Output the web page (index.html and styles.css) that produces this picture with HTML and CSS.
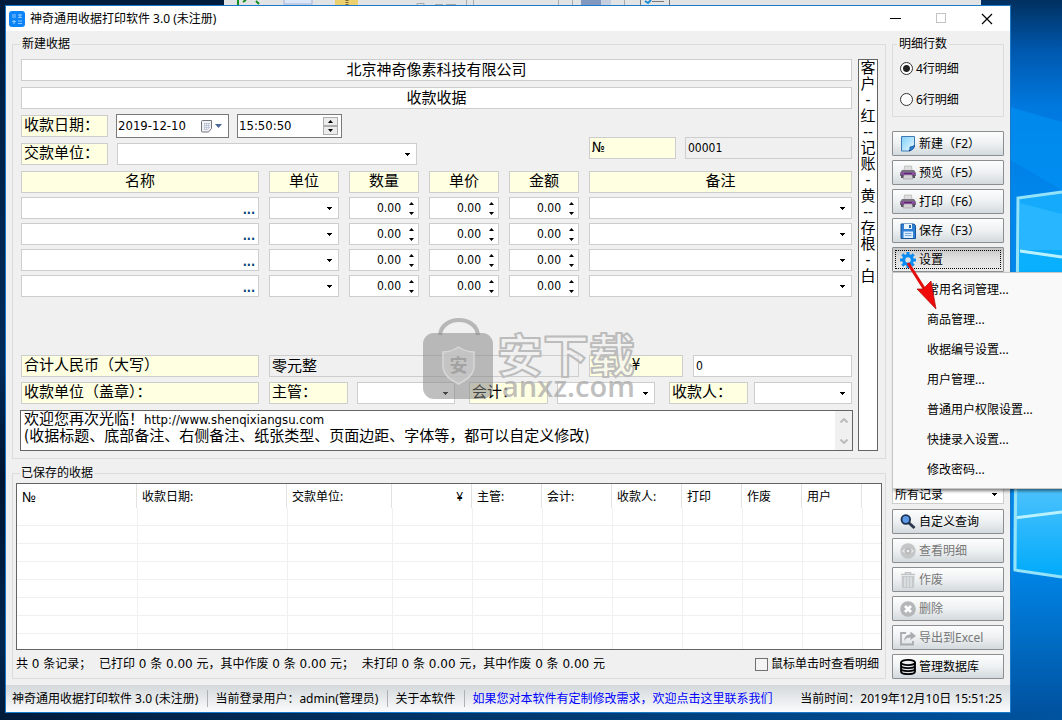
FILE: index.html
```html
<!DOCTYPE html>
<html lang="zh-CN">
<head>
<meta charset="utf-8">
<title>神奇通用收据打印软件 3.0</title>
<link rel="stylesheet" href="styles.css">
</head>
<body>
<div class="desktop">
  <svg class="wallpaper" viewBox="0 0 1062 720" preserveAspectRatio="none" aria-hidden="true">
    <defs>
      <linearGradient id="left" x1="0" y1="0" x2="0" y2="1"><stop offset="0" stop-color="#001c3d"/><stop offset=".5" stop-color="#002a58"/><stop offset=".66" stop-color="#001430"/><stop offset=".9" stop-color="#00264f"/><stop offset="1" stop-color="#001a3a"/></linearGradient>
      <linearGradient id="right" x1="0" y1="0" x2="0" y2="1"><stop offset="0" stop-color="#00305f"/><stop offset=".07" stop-color="#0058ae"/><stop offset=".15" stop-color="#0079df"/><stop offset=".28" stop-color="#0087ec"/><stop offset=".8" stop-color="#0083e4"/><stop offset="1" stop-color="#004f9c"/></linearGradient>
      <linearGradient id="bottom" x1="0" y1="0" x2="1" y2="0"><stop offset="0" stop-color="#001a3a"/><stop offset=".4" stop-color="#003466"/><stop offset="1" stop-color="#00539f"/></linearGradient>
      <linearGradient id="pane" x1="0" y1="0" x2="0" y2="1"><stop offset="0" stop-color="#18a9fb"/><stop offset=".3" stop-color="#00b4ff"/><stop offset=".75" stop-color="#53c4fd"/><stop offset="1" stop-color="#00aafa"/></linearGradient>
    </defs>
    <rect width="1000" height="720" fill="url(#left)"/>
    <rect x="981" width="81" height="720" fill="url(#right)"/>
    <rect y="712" width="1062" height="8" fill="url(#bottom)"/>
    <path d="M1010 107L1062 122V190L1010 160Z" fill="#0092f5" opacity=".6"/>
    <path d="M1017 197L1062 191V577L1013 570Z" fill="url(#pane)"/>
    <path d="M1020 203L1062 214V250L1020 250Z" fill="#27b6ff"/>
    <path d="M1020 251L1062 257" stroke="#b9f1ff" stroke-width="3"/>
    <path d="M1014 518L1062 512" stroke="#b9f1ff" stroke-width="3"/>
    <path d="M1062 192L1018 198L1015 570L1062 577" fill="none" stroke="#94e3f8" stroke-width="3"/>
    <rect x="224" width="757" height="5" fill="#e2e3e5"/>
    <path d="M238 0V5M243 2L246 0M256 1L259 4" stroke="#149022" stroke-width="2"/>
    <rect x="284" y="-2" width="28" height="6" fill="#dbe6f7" stroke="#a3b4d5"/>
    <rect x="335" width="23" height="5" fill="#ecd06e"/><path d="M347 0V5" stroke="#7a6530" stroke-width="3" stroke-dasharray="1 1"/>
    <path d="M417 5V3.500H424V5M435 4.500H443M446 4.500H456M466.500 0V5M473.500 0V5M558.500 0V5M572.500 0V5M624.500 0V5" stroke="#aaa" fill="none"/>
    <rect x="581" width="20" height="5" fill="#8398be"/><rect x="601" width="10" height="5" fill="#c5cede"/>
    <path d="M640.500 0V5M669.500 0V5M652 1.500H664" stroke="#777"/><path d="M645 1L648 3L651 0" stroke="#1b8cd2" stroke-width="2" fill="none"/>
  </svg>

  <div class="window">
    <header class="titlebar">
      <svg class="app-icon" width="16" height="16" viewBox="0 0 16 16" aria-hidden="true"><rect width="16" height="16" rx="3" fill="#0a84f7"/><path d="M3 4H7M3 6H7M9 4H13M9 6.500H13M11 3V7M3 10.500H7M5 9V13M9 10H13M9 12.500H13" stroke="#8cc8ff" stroke-width="1.200"/></svg>
      <h1 class="title">神奇通用收据打印软件 3.0 (未注册)</h1>
      <button class="win-btn" aria-label="最小化"><svg width="11" height="11"><path d="M0 5.500H11" stroke="#000"/></svg></button>
      <button class="win-btn" aria-label="最大化" disabled><svg width="11" height="11"><rect x=".5" y=".5" width="9" height="9" fill="none" stroke="#c3c3c3"/></svg></button>
      <button class="win-btn" aria-label="关闭"><svg width="12" height="12"><path d="M1 1L11 11M11 1L1 11" stroke="#000" stroke-width="1.200"/></svg></button>
    </header>

    <main class="client">
      <div class="work">
        <fieldset class="group receipt">
          <legend>新建收据</legend>
          <div class="receipt-body">
          <form class="form">
            <input class="box heading" value="北京神奇像素科技有限公司" aria-label="单位名称">
            <input class="box heading" value="收款收据" aria-label="收据标题">
            <div class="meta">
              <div class="meta-left">
                <div class="line">
                  <label class="box tag short" for="date">收款日期：</label>
                  <div class="picker date">
                    <input id="date" value="2019-12-10">
                    <svg width="22" height="13" viewBox="0 0 22 13" aria-hidden="true"><path d="M.5 1.500Q.5.500 1.500.500H10.500V8.500L7.500 12H1.500Q.5 12 .5 11Z" fill="#f2f2f2" stroke="#70747c"/><path d="M3 3.500H9M3 5.500H9M3 7.500H9M3 9.500H7M3.500 3V10M5.500 3V10M7.500 3V9" stroke="#b7c3d8" stroke-width=".8"/><path d="M14 4H21L17.500 8Z" fill="#4a6694"/></svg>
                  </div>
                  <div class="picker time">
                    <input value="15:50:50" aria-label="收款时间">
                    <span class="updown"><button type="button" aria-label="增加"><svg width="5" height="3"><path d="M0 3L2.500 0L5 3Z"/></svg></button><button type="button" aria-label="减少"><svg width="5" height="3"><path d="M0 0L2.500 3L5 0Z"/></svg></button></span>
                  </div>
                </div>
                <div class="line payer">
                  <label class="box tag short" for="payer">交款单位：</label>
                  <select class="box combo" id="payer"><option></option></select>
                </div>
              </div>
              <div class="number">
                <label class="box tag numero" for="no">№</label>
                <input class="box latin readonly" id="no" value="00001" readonly>
              </div>
            </div>

            <div class="items" id="items">
              <div class="box tag center">名称</div><div class="box tag center">单位</div><div class="box tag center">数量</div><div class="box tag center">单价</div><div class="box tag center">金额</div><div class="box tag center">备注</div>
            </div>

            <div class="totals">
              <div class="box tag">合计人民币（大写）</div>
              <input class="box readonly words" value="零元整" aria-label="合计人民币（大写）" readonly>
              <label class="box tag center" for="sum">¥</label>
              <input class="box latin" id="sum" value="0">
            </div>
            <div class="signers">
              <div class="box tag">收款单位（盖章）：</div>
              <div class="signer"><label class="box tag" for="s1">主管：</label><select class="box combo" id="s1"><option></option></select></div>
              <div class="signer"><label class="box tag" for="s2">会计：</label><select class="box combo" id="s2"><option></option></select></div>
              <div class="signer last"><label class="box tag" for="s3">收款人：</label><select class="box combo" id="s3"><option></option></select></div>
            </div>
            <div class="notes">
              <div class="notes-text" contenteditable="true" role="textbox" aria-label="底部备注" spellcheck="false">欢迎您再次光临！<span class="url">http://www.shenqixiangsu.com</span><br>(收据标题、底部备注、右侧备注、纸张类型、页面边距、字体等，都可以自定义修改)</div>
              <div class="scroll" aria-hidden="true"><svg width="8" height="5"><path d="M0.500 4.500L4 1L7.500 4.500"/></svg><svg width="8" height="5"><path d="M0.500 .500L4 4L7.500 .500"/></svg></div>
            </div>
            <svg class="watermark" width="216" height="86" viewBox="0 0 216 86" aria-hidden="true">
              <path d="M17 17C19 -3 53 -3 55 17" fill="none" stroke="#888" stroke-opacity=".55" stroke-width="4"/>
              <rect y="15" width="70" height="66" rx="11" fill="#858585" fill-opacity=".52"/>
              <path d="M35.500 29C31 32 25 34 20 34V48C20 57 28 62 35.500 66C43 62 51 57 51 48V34C46 34 40 32 35.500 29Z" fill="#c9c9c9" fill-opacity=".7" stroke="#d8d8d8" stroke-width="1.500"/>
              <text class="wm-shield" x="35.500" y="54" text-anchor="middle">安</text>
              <text class="wm-name" x="74" y="54">安下载</text>
              <text class="wm-url" x="79" y="79">anxz.com</text>
            </svg>
          </form>
          <textarea class="side-note" aria-label="右侧备注" spellcheck="false">客
户
-
红
--
记
账
-
黄
--
存
根
-
白</textarea>
          </div>
        </fieldset>

        <fieldset class="group saved">
          <legend>已保存的收据</legend>
          <div class="saved-body">
          <div class="grid-wrap">
            <table class="grid">
              <colgroup><col class="w120"><col class="w150"><col class="w105"><col class="w80"><col class="w70"><col class="w70"><col class="w70"><col class="w60"><col class="w60"><col class="w60"><col></colgroup>
              <thead><tr><th class="no">№</th><th>收款日期:</th><th>交款单位:</th><th class="right">¥</th><th>主管:</th><th>会计:</th><th>收款人:</th><th>打印</th><th>作废</th><th>用户</th><th></th></tr></thead>
              <tbody id="rows"></tbody>
            </table>
          </div>
          <div class="summary">
            <span>共 0 条记录；&nbsp; 已打印 0 条 0.00 元，其中作废 0 条 0.00 元；&nbsp; 未打印 0 条 0.00 元，其中作废 0 条 0.00 元</span>
            <label class="check"><input type="checkbox">鼠标单击时查看明细</label>
          </div>
          </div>
        </fieldset>
      </div>

      <aside class="side">
        <fieldset class="group rows-choice">
          <legend>明细行数</legend>
          <div class="radios">
            <label class="radio"><input type="radio" name="n" checked>4行明细</label>
            <label class="radio"><input type="radio" name="n">6行明细</label>
          </div>
        </fieldset>
        <div class="buttons top">
          <button class="btn"><svg width="16" height="16" viewBox="0 0 16 16"><defs><linearGradient id="n" x2="1" y2="1"><stop stop-color="#7fd0fa"/><stop offset="1" stop-color="#e9f9ff"/></linearGradient></defs><path d="M1.500 .500H14.500V10L9.500 15H1.500Z" fill="url(#n)" stroke="#3e78b4"/><path d="M14.500 9.500C12 11 10 11 10 11C10.500 13 9 15 9 15C12 14.500 14.500 12 14.500 9.500Z" fill="#2a8ae0" stroke="#174f92"/></svg>新建（F2）</button>
          <button class="btn"><svg width="16" height="16" viewBox="0 0 16 16"><use href="#printer"/></svg>预览（F5）</button>
          <button class="btn"><svg width="16" height="16" viewBox="0 0 16 16"><g id="printer"><path d="M4.500 1H11.500L12 6H4Z" fill="#ddd" stroke="#aaa" stroke-width=".6"/><path d="M2 5H14L16 8V11H0V8Z" fill="#77717d"/><path d="M1 7.500H15V10H1Z" fill="#8f4aa5"/><path d="M1 10H4V13H1ZM12 10H15V13H12Z" fill="#57515c"/><path d="M4 10H12L13 14H3Z" fill="#d5d2d6" stroke="#8a8590" stroke-width=".5"/><path d="M4 8.500H12" stroke="#5a226e"/></g></svg>打印（F6）</button>
          <button class="btn"><svg width="16" height="16" viewBox="0 0 16 16"><path d="M1 1H14L15.500 2.500V15.500H1Z" fill="#2f7fd3" stroke="#16569d"/><path d="M4 1H12V6H4Z" fill="#eaf4fd"/><path d="M9 2H11V5H9Z" fill="#2767ad"/><path d="M3.500 8.500H13V15H3.500Z" fill="#dceeff"/><path d="M5 10.500H11.500M5 12.500H11.500" stroke="#78a9da"/></svg>保存（F3）</button>
          <div class="settings">
            <button class="btn pressed" aria-expanded="true"><svg width="16" height="16" viewBox="0 0 16 16"><circle cx="8" cy="8" r="4.300" fill="none" stroke="#0b8cf2" stroke-width="3.200"/><path d="M8 0V3M8 13V16M0 8H3M13 8H16M2.300 2.300L4.500 4.500M11.500 11.500L13.700 13.700M13.700 2.300L11.500 4.500M4.500 11.500L2.300 13.700" stroke="#0b8cf2" stroke-width="3"/></svg>设置</button>
            <div class="menu" role="menu">
              <button role="menuitem">常用名词管理...</button>
              <button role="menuitem">商品管理...</button>
              <button role="menuitem">收据编号设置...</button>
              <button role="menuitem">用户管理...</button>
              <button role="menuitem">普通用户权限设置...</button>
              <button role="menuitem">快捷录入设置...</button>
              <button role="menuitem">修改密码...</button>
            </div>
            <svg class="pointer" width="34" height="50" viewBox="0 0 34 50" aria-hidden="true"><path d="M2 3L19 30" stroke="#e30d0d" stroke-width="3"/><path d="M30 49L11 29L17 29L25 21Z" fill="#f00a0a" stroke="#a80c0c" stroke-width=".7"/></svg>
          </div>
        </div>
        <div class="buttons bottom">
          <select class="box combo filter" aria-label="记录筛选"><option>所有记录</option></select>
          <button class="btn"><svg width="16" height="16" viewBox="0 0 16 16"><path d="M8.500 8.500L14.500 14" stroke="#2b3a4d" stroke-width="3"/><circle cx="5.800" cy="5.500" r="4.300" fill="#5d9ae6" stroke="#1c3050" stroke-width="1.800"/></svg>自定义查询</button>
          <button class="btn" disabled><svg width="16" height="16" viewBox="0 0 16 16"><circle cx="8" cy="8" r="7.700" fill="#c4c6c7"/><path d="M2 8Q8 1.500 14 8Q8 14.500 2 8Z" fill="#e6e7e8"/><circle cx="8" cy="8" r="3.500" fill="#bbb"/><circle cx="8" cy="8" r="1.300" fill="#f0f0f0"/></svg>查看明细</button>
          <button class="btn" disabled><svg width="16" height="16" viewBox="0 0 16 16"><path d="M1 2.500H15M5.500 2V.500H10.500V2" stroke="#c0c3c5" stroke-width="1.500" fill="none"/><path d="M1.500 4H14.500L14 16H2Z" fill="#c6c9cb"/><path d="M5 5V15M8 5V15M11 5V15" stroke="#e6e9ea" stroke-width="1.200"/></svg>作废</button>
          <button class="btn" disabled><svg width="16" height="16" viewBox="0 0 16 16"><circle cx="8" cy="8" r="7.800" fill="#b4b6b8"/><path d="M5 5L11 11M11 5L5 11" stroke="#fff" stroke-width="2.800"/></svg>删除</button>
          <button class="btn" disabled><svg width="16" height="16" viewBox="0 0 16 16"><path d="M6 3H1V14.500H13V11" fill="none" stroke="#a9acae" stroke-width="1.800"/><path d="M4 11C4.500 6.500 7 4.500 10.500 4.500V1.500L16 6L10.500 10V7.500C8 7.300 6 8 4 11Z" fill="#a9acae"/></svg>导出到Excel</button>
          <button class="btn"><svg width="16" height="16" viewBox="0 0 16 16"><path d="M1 3.500V12.500C1 16 15 16 15 12.500V3.500M1 6.500C1 10 15 10 15 6.500M1 9.500C1 13 15 13 15 9.500" fill="none" stroke="#000" stroke-width="1.800"/><ellipse cx="8" cy="3.500" rx="7" ry="2.600" fill="#eee" stroke="#000" stroke-width="1.800"/></svg>管理数据库</button>
        </div>
      </aside>
    </main>

    <footer class="status">
      <span class="cell">神奇通用收据打印软件 3.0 (未注册)</span>
      <span class="cell">当前登录用户：admin(管理员)</span>
      <span class="cell">关于本软件</span>
      <a class="cell" href="#">如果您对本软件有定制修改需求，欢迎点击这里联系我们</a>
      <span class="clock">当前时间：2019年12月10日 15:51:25</span>
    </footer>
  </div>
</div>
<script src="app.js"></script>
</body>
</html>
```

FILE: app.js
```js
const items = document.getElementById('items');
for (let row = 1; row <= 4; row++) {
  const amount = (name) =>
    `<span class="box spin"><input type="number" step="0.01" value="0.00" aria-label="${name}${row}">` +
    '<svg width="5" height="13" aria-hidden="true"><path d="M0 3L2.5 0L5 3ZM0 10L2.500 13L5 10Z"/></svg></span>';
  items.insertAdjacentHTML('beforeend',
    `<span class="box lookup"><input aria-label="名称${row}"><button type="button">...</button></span>` +
    `<select class="box combo" aria-label="单位${row}"><option></option></select>` +
    amount('数量') + amount('单价') + amount('金额') +
    `<select class="box combo" aria-label="备注${row}"><option></option></select>`);
}
document.getElementById('rows').innerHTML = ('<tr>' + '<td></td>'.repeat(11) + '</tr>').repeat(8);
```

FILE: styles.css
```css
* { box-sizing: border-box; }

body {
  margin: 0;
  overflow: hidden;
  color: #000;
  font: 12px/14px "Noto Sans", "Noto Sans CJK SC", sans-serif;
}

button, input, select, textarea { font: inherit; color: inherit; margin: 0; }
button { padding: 0; border: 0; background: none; }
fieldset { min-width: 0; margin: 0; }

.desktop {
  position: relative;
  display: flex;
  height: 100vh;
  padding: 5px 51px 7px 5px;
}
.wallpaper { position: absolute; inset: 0; width: 100%; height: 100%; }

.window {
  position: relative;
  flex: 1;
  min-width: 0;
  display: flex;
  flex-direction: column;
  border: 1px solid #1979ca;
  background: #f0f0f0;
}

/* Title bar */
.titlebar { display: flex; align-items: center; height: 25px; padding-left: 3px; background: #fff; }
.title { flex: 1; margin: 0 0 0 5px; font-size: 12px; font-weight: 400; }
.win-btn { display: flex; align-items: center; justify-content: center; width: 46px; height: 25px; }

/* Client area */
.client { flex: 1; min-height: 0; display: flex; gap: 6px; padding: 6px; }
.work { flex: 1; min-width: 0; display: flex; flex-direction: column; gap: 7px; }
.group { border: 1px solid #dcdcdc; padding: 0; }
.group legend { height: 14px; padding: 0 2px; margin-left: 7px; }

.receipt-body { display: flex; gap: 6px; padding: 8px 7px 7px 8px; }
.form { position: relative; flex: 1; min-width: 0; display: flex; flex-direction: column; gap: 6px; }

.box {
  display: block;
  min-width: 0;
  width: 100%;
  height: 22px;
  padding: 0 2px;
  border: 1px solid #cdcdcd;
  border-radius: 0;
  background: #fff;
  font-family: "DejaVu Sans Condensed", "Noto Sans CJK SC", sans-serif;
  font-size: 15px;
  line-height: 18px;
  white-space: nowrap;
  outline: 0;
}
.tag { background: #ffffe1; }
.center, .heading { text-align: center; }
.latin { font-size: 12px; }
.numero { font-size: 14px; }
.readonly { background: #f0f0f0; }
.heading, .words { padding-bottom: 4px; }

.combo {
  appearance: none;
  font-size: 12px;
  background: #fff url("data:image/svg+xml,%3Csvg xmlns='http://www.w3.org/2000/svg' width='5' height='3'%3E%3Cpath d='M0 0H5V1H4V2H3V3H2V2H1V1H0Z'/%3E%3C/svg%3E") no-repeat right 6px center;
}

.meta { display: grid; grid-template-columns: 396fr 263fr; column-gap: 172px; }
.meta-left { display: flex; flex-direction: column; gap: 6px; }
.line { display: flex; align-items: center; gap: 8px; height: 22px; }
.payer { gap: 9px; }
.short { flex: none; width: 87px; }
.number { display: grid; grid-template-columns: 87fr 167fr; gap: 9px; align-self: end; margin-bottom: 6px; }

.picker {
  display: flex;
  align-items: center;
  height: 24px;
  padding: 0 3px 0 1px;
  border: 1px solid #7a7a7a;
  background: #fff;
  font-family: "DejaVu Sans Condensed", sans-serif;
  font-size: 13px;
}
.picker input { flex: 1; min-width: 0; padding: 0; border: 0; outline: 0; background: none; }
.date { width: 113px; padding-right: 5px; }
.time { width: 105px; }
.updown { display: grid; width: 15px; }
.updown button { display: flex; align-items: center; justify-content: center; height: 9px; border: 1px solid #adadad; background: #ececec; }

.items { display: grid; grid-template-columns: 238fr 70fr 70fr 70fr 70fr 263fr; gap: 4px 10px; }
.lookup, .spin { display: flex; align-items: center; }
.lookup input, .spin input { flex: 1; min-width: 0; width: 100%; padding: 0; border: 0; outline: 0; background: none; }
.lookup button { color: #00457c; font-size: 12px; padding: 3px 1px 0; font-weight: 700; }
.spin { gap: 8px; padding-right: 4px; font-size: 12px; }
.spin input { text-align: right; appearance: textfield; }
.spin input::-webkit-inner-spin-button { display: none; }

.totals { display: grid; grid-template-columns: 238fr 310fr 94fr 159fr; gap: 10px; margin-top: 52px; }
.signers { display: grid; grid-template-columns: 234fr 186fr 186fr 183fr; gap: 14px; margin-top: -1px; }
.signers > .tag { width: auto; margin-right: -4px; }
.signer { display: grid; grid-template-columns: 79fr 98fr; gap: 9px; }
.signer.last { gap: 6px; }

.notes { display: flex; height: 41px; margin: 0 -1px; border: 1px solid #646464; background: #fff; }
.notes-text {
  flex: 1;
  padding-left: 3px;
  overflow: hidden;
  font: 15px/16px "DejaVu Sans Condensed", "Noto Sans CJK SC", sans-serif;
  white-space: nowrap;
  outline: 0;
}
.url { font-size: 13px; }
.scroll { display: flex; flex-direction: column; align-items: center; justify-content: space-between; width: 17px; padding: 7px 0 6px; background: #f0f0f0; }
.scroll path { fill: none; stroke: #bcbcbc; stroke-width: 2; }

.side-note {
  width: 20px;
  padding: 0;
  border: 1px solid #646464;
  background: #fff;
  font: 15px/16px "DejaVu Sans Condensed", "Noto Sans CJK SC", sans-serif;
  text-align: center;
  resize: none;
  overflow: hidden;
  outline: 0;
}

.watermark { position: absolute; left: 402px; top: 259px; pointer-events: none; }
.wm-shield { font: 700 18px "Noto Sans CJK SC", sans-serif; fill: #a2a2a2; }
.wm-name { font: 700 46px "Noto Sans CJK SC", sans-serif; fill: #f2f2f2; fill-opacity: .5; stroke: #bcbcbc; stroke-width: 2; stroke-linejoin: round; }
.wm-url { font: 600 29px "Open Sans", sans-serif; fill: #aaa; fill-opacity: .75; }

/* Saved receipts */
.saved { flex: 1; min-height: 0; display: flex; flex-direction: column; }
.saved legend { padding: 0 1px; }
.saved-body { flex: 1; min-height: 0; display: flex; flex-direction: column; padding: 3px 3px 0; }
.grid-wrap { flex: 1 1 0; min-height: 0; overflow: hidden; border: 1px solid #646464; background: #fff; }
.grid { width: 100%; table-layout: fixed; border-spacing: 0; }
.grid th { height: 24px; padding: 2px 5px 0; border-right: 1px solid #e2e2e2; font-weight: 400; text-align: left; white-space: nowrap; }
.grid th:last-child { border: 0; }
.grid .no { font-size: 14px; }
.grid .right { text-align: right; padding-right: 8px; }
.grid td { height: 18px; padding: 0; border-left: 1px solid #f0f0f0; border-bottom: 1px solid #f0f0f0; }
.grid td:first-child { border-left: 0; }
.w150 { width: 150px; }
.w120 { width: 120px; }
.w105 { width: 105px; }
.w80 { width: 80px; }
.w70 { width: 70px; }
.w60 { width: 60px; }
.summary {
  display: flex;
  align-items: center;
  justify-content: space-between;
  height: 28px;
  font-family: "DejaVu Sans", "Noto Sans CJK SC", sans-serif;
  white-space: nowrap;
}
.check { display: flex; align-items: center; gap: 3px; padding-right: 3px; }
.check input { appearance: none; width: 13px; height: 13px; border: 1px solid #707070; background: #f4f4f4; }

/* Right column */
.side { display: flex; flex-direction: column; width: 112px; flex: none; }
.rows-choice { height: 80px; }
.rows-choice legend { margin-left: 4px; }
.radios { padding-top: 2px; }
.radio { display: flex; align-items: center; gap: 3px; height: 31px; padding-left: 7px; }
.radio input {
  appearance: none;
  width: 13px;
  height: 13px;
  border: 1px solid #333;
  border-radius: 50%;
  background: #fff;
}
.radio input:checked { background: radial-gradient(circle, #222 3px, #fff 4px); }

.buttons { display: flex; flex-direction: column; gap: 4px; }
.buttons.top { margin-top: 14px; }
.buttons.bottom { margin-top: auto; }
.btn {
  display: flex;
  align-items: center;
  gap: 3px;
  width: 100%;
  height: 25px;
  padding: 0 7px;
  border: 1px solid #8b8f91;
  border-radius: 1px;
  background: linear-gradient(#fdfdfd, #eef1f2 50%, #d3d9dd);
  font-family: "Noto Sans", "Noto Sans CJK SC", sans-serif;
  white-space: nowrap;
}
.btn:disabled { color: #777; }
.btn svg { flex: none; }
.pressed { background: linear-gradient(#c4c4c4, #dedede 40%, #ebebeb); outline: 1px dotted #000; outline-offset: -4px; }
.filter { height: 19px; margin-bottom: 1px; line-height: 16px; }

.settings { position: relative; }
.menu {
  position: absolute;
  z-index: 2;
  left: 0;
  top: 25px;
  width: 180px;
  padding: 2px 0 3px;
  border: 1px solid #c6c6c6;
  background: #f9f9f9;
  box-shadow: 2px 2px 3px rgba(0, 0, 0, .5);
}
.menu button { display: block; width: 100%; height: 30px; padding-left: 34px; text-align: left; }
.pointer { position: absolute; z-index: 3; left: 14px; top: 13px; }

/* Status bar */
.status {
  display: flex;
  align-items: center;
  height: 27px;
  padding: 0 8px 0 6px;
  background: linear-gradient(#d3d8db, #fbfcfc);
  white-space: nowrap;
}
.cell { padding-right: 9px; margin-right: 7px; border-right: 1px solid #aeb2b4; line-height: 17px; }
a.cell { border: 0; color: #00f; text-decoration: none; }
.clock { margin-left: auto; }
```
